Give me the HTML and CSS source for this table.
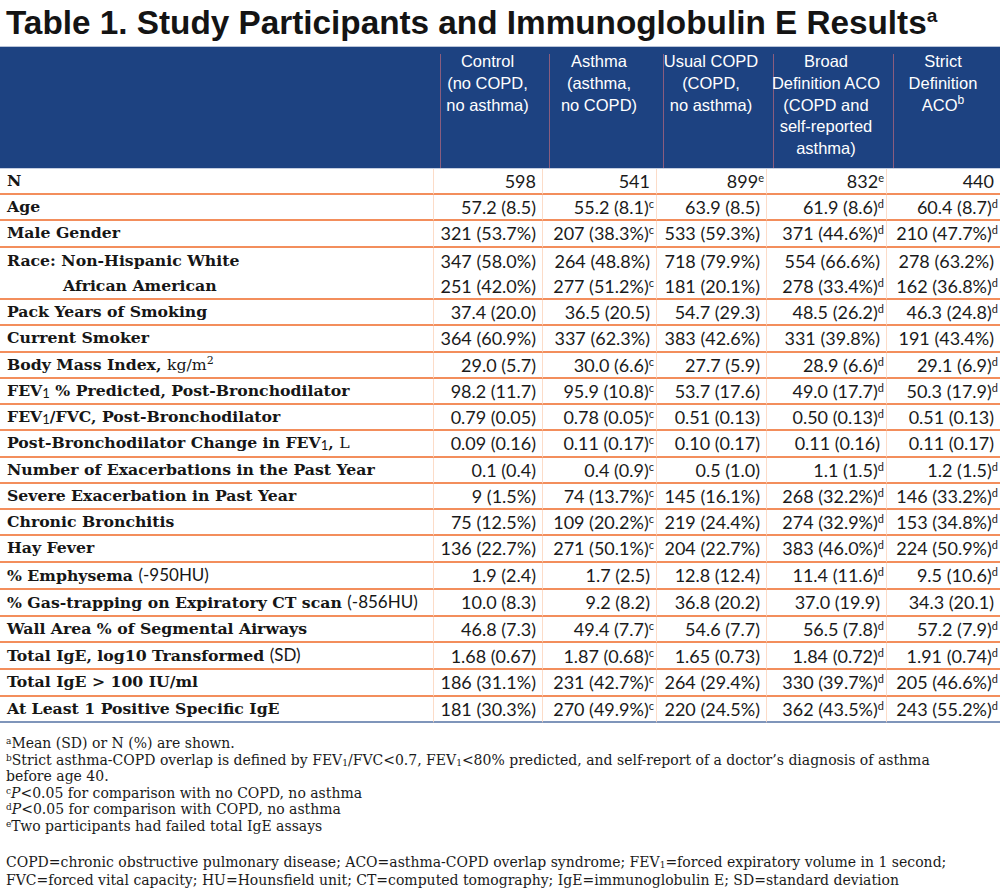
FILE: index.html
```html
<!DOCTYPE html>
<html lang="en">
<head>
<meta charset="utf-8">
<title>Table 1. Study Participants and Immunoglobulin E Results</title>
<link rel="stylesheet" href="styles.css">
</head>
<body>
<div class="page">
  <h1 class="title">Table 1. Study Participants and Immunoglobulin E Results<sup>a</sup></h1>
  <table class="results">
    <colgroup>
      <col class="c-label">
      <col class="c-ctrl">
      <col class="c-asth">
      <col class="c-copd">
      <col class="c-broad">
      <col class="c-strict">
    </colgroup>
    <thead>
      <tr>
        <th class="blank"></th>
        <th>Control<br>(no COPD,<br>no asthma)</th>
        <th>Asthma<br>(asthma,<br>no COPD)</th>
        <th>Usual COPD<br>(COPD,<br>no asthma)</th>
        <th>Broad<br>Definition ACO<br>(COPD and<br>self-reported<br>asthma)</th>
        <th>Strict<br>Definition<br>ACO<sup>b</sup></th>
      </tr>
    </thead>
    <tbody>
      <tr><td class="lbl">N</td><td>598</td><td>541</td><td>899<sup>e</sup></td><td>832<sup>e</sup></td><td>440</td></tr>
      <tr><td class="lbl">Age</td><td>57.2 (8.5)</td><td>55.2 (8.1)<sup>c</sup></td><td>63.9 (8.5)</td><td>61.9 (8.6)<sup>d</sup></td><td>60.4 (8.7)<sup>d</sup></td></tr>
      <tr><td class="lbl">Male Gender</td><td>321 (53.7%)</td><td>207 (38.3%)<sup>c</sup></td><td>533 (59.3%)</td><td>371 (44.6%)<sup>d</sup></td><td>210 (47.7%)<sup>d</sup></td></tr>
      <tr class="join"><td class="lbl">Race: Non-Hispanic White</td><td>347 (58.0%)</td><td>264 (48.8%)</td><td>718 (79.9%)</td><td>554 (66.6%)</td><td>278 (63.2%)</td></tr>
      <tr><td class="lbl indent">African American</td><td>251 (42.0%)</td><td>277 (51.2%)<sup>c</sup></td><td>181 (20.1%)</td><td>278 (33.4%)<sup>d</sup></td><td>162 (36.8%)<sup>d</sup></td></tr>
      <tr><td class="lbl">Pack Years of Smoking</td><td>37.4 (20.0)</td><td>36.5 (20.5)</td><td>54.7 (29.3)</td><td>48.5 (26.2)<sup>d</sup></td><td>46.3 (24.8)<sup>d</sup></td></tr>
      <tr><td class="lbl">Current Smoker</td><td>364 (60.9%)</td><td>337 (62.3%)</td><td>383 (42.6%)</td><td>331 (39.8%)</td><td>191 (43.4%)</td></tr>
      <tr><td class="lbl">Body Mass Index, <span class="unit">kg/m<span class="pow">2</span></span></td><td>29.0 (5.7)</td><td>30.0 (6.6)<sup>c</sup></td><td>27.7 (5.9)</td><td>28.9 (6.6)<sup>d</sup></td><td>29.1 (6.9)<sup>d</sup></td></tr>
      <tr><td class="lbl">FEV<sub>1</sub> % Predicted, Post-Bronchodilator</td><td>98.2 (11.7)</td><td>95.9 (10.8)<sup>c</sup></td><td>53.7 (17.6)</td><td>49.0 (17.7)<sup>d</sup></td><td>50.3 (17.9)<sup>d</sup></td></tr>
      <tr><td class="lbl">FEV<sub>1</sub>/FVC, Post-Bronchodilator</td><td>0.79 (0.05)</td><td>0.78 (0.05)<sup>c</sup></td><td>0.51 (0.13)</td><td>0.50 (0.13)<sup>d</sup></td><td>0.51 (0.13)</td></tr>
      <tr><td class="lbl">Post-Bronchodilator Change in FEV<sub>1</sub>, <span class="unit">L</span></td><td>0.09 (0.16)</td><td>0.11 (0.17)<sup>c</sup></td><td>0.10 (0.17)</td><td>0.11 (0.16)</td><td>0.11 (0.17)</td></tr>
      <tr><td class="lbl">Number of Exacerbations in the Past Year</td><td>0.1 (0.4)</td><td>0.4 (0.9)<sup>c</sup></td><td>0.5 (1.0)</td><td>1.1 (1.5)<sup>d</sup></td><td>1.2 (1.5)<sup>d</sup></td></tr>
      <tr><td class="lbl">Severe Exacerbation in Past Year</td><td>9 (1.5%)</td><td>74 (13.7%)<sup>c</sup></td><td>145 (16.1%)</td><td>268 (32.2%)<sup>d</sup></td><td>146 (33.2%)<sup>d</sup></td></tr>
      <tr><td class="lbl">Chronic Bronchitis</td><td>75 (12.5%)</td><td>109 (20.2%)<sup>c</sup></td><td>219 (24.4%)</td><td>274 (32.9%)<sup>d</sup></td><td>153 (34.8%)<sup>d</sup></td></tr>
      <tr><td class="lbl">Hay Fever</td><td>136 (22.7%)</td><td>271 (50.1%)<sup>c</sup></td><td>204 (22.7%)</td><td>383 (46.0%)<sup>d</sup></td><td>224 (50.9%)<sup>d</sup></td></tr>
      <tr><td class="lbl">% Emphysema <span class="plain">(-950HU)</span></td><td>1.9 (2.4)</td><td>1.7 (2.5)</td><td>12.8 (12.4)</td><td>11.4 (11.6)<sup>d</sup></td><td>9.5 (10.6)<sup>d</sup></td></tr>
      <tr><td class="lbl">% Gas-trapping on Expiratory CT scan <span class="plain">(-856HU)</span></td><td>10.0 (8.3)</td><td>9.2 (8.2)</td><td>36.8 (20.2)</td><td>37.0 (19.9)</td><td>34.3 (20.1)</td></tr>
      <tr><td class="lbl">Wall Area % of Segmental Airways</td><td>46.8 (7.3)</td><td>49.4 (7.7)<sup>c</sup></td><td>54.6 (7.7)</td><td>56.5 (7.8)<sup>d</sup></td><td>57.2 (7.9)<sup>d</sup></td></tr>
      <tr><td class="lbl">Total IgE, log10 Transformed <span class="plain">(SD)</span></td><td>1.68 (0.67)</td><td>1.87 (0.68)<sup>c</sup></td><td>1.65 (0.73)</td><td>1.84 (0.72)<sup>d</sup></td><td>1.91 (0.74)<sup>d</sup></td></tr>
      <tr><td class="lbl">Total IgE &gt; 100 IU/ml</td><td>186 (31.1%)</td><td>231 (42.7%)<sup>c</sup></td><td>264 (29.4%)</td><td>330 (39.7%)<sup>d</sup></td><td>205 (46.6%)<sup>d</sup></td></tr>
      <tr class="last"><td class="lbl">At Least 1 Positive Specific IgE</td><td>181 (30.3%)</td><td>270 (49.9%)<sup>c</sup></td><td>220 (24.5%)</td><td>362 (43.5%)<sup>d</sup></td><td>243 (55.2%)<sup>d</sup></td></tr>
    </tbody>
  </table>
  <div class="notes">
    <p class="note"><sup>a</sup>Mean (SD) or N (%) are shown.</p>
    <p class="note"><sup>b</sup>Strict asthma-COPD overlap is defined by FEV<sub>1</sub>/FVC&lt;0.7, FEV<sub>1</sub>&lt;80% predicted, and self-report of a doctor’s diagnosis of asthma before age 40.</p>
    <p class="note"><sup>c</sup><i>P</i>&lt;0.05 for comparison with no COPD, no asthma</p>
    <p class="note"><sup>d</sup><i>P</i>&lt;0.05 for comparison with COPD, no asthma</p>
    <p class="note"><sup>e</sup>Two participants had failed total IgE assays</p>
    <p class="abbr">COPD=chronic obstructive pulmonary disease; ACO=asthma-COPD overlap syndrome; FEV<sub>1</sub>=forced expiratory volume in 1 second; FVC=forced vital capacity; HU=Hounsfield unit; CT=computed tomography; IgE=immunoglobulin E; SD=standard deviation</p>
  </div>
</div>
</body>
</html>
```

FILE: styles.css
```css
html, body {
  margin: 0;
  padding: 0;
  background: #ffffff;
}

.page {
  width: 1000px;
  color: #111111;
}

.title {
  margin: 0;
  padding: 1px 0 0 6px;
  height: 45px;
  line-height: 44px;
  font-family: "Liberation Sans", Arial, sans-serif;
  font-weight: bold;
  font-size: 33.3px;
  letter-spacing: 0;
  color: #141414;
  white-space: nowrap;
}

.title sup {
  font-size: 19px;
  vertical-align: 12px;
  line-height: 0;
}

.results {
  width: 1000px;
  table-layout: fixed;
  border-collapse: separate;
  border-spacing: 0;
}

.c-label { width: 433px; }
.c-ctrl { width: 109px; }
.c-asth { width: 114px; }
.c-copd { width: 110px; }
.c-broad { width: 120px; }
.c-strict { width: 114px; }

.results thead th {
  background: linear-gradient(#8a5d7e, #8a5d7e) left 7px top 7px / 1px calc(100% - 7px) no-repeat, #1d4281;
  color: #ffffff;
  font-family: "Liberation Sans", Arial, sans-serif;
  font-weight: normal;
  font-size: 16.5px;
  line-height: 21.8px;
  text-align: center;
  vertical-align: top;
  padding: 4px 0 8px;
  border-top: 1px solid #b9c4d8;
  border-bottom: 1px solid #c4cde0;
}

.results thead th.blank {
  background: #1d4281;
}

.results thead th sup {
  font-size: 12px;
  vertical-align: 7px;
  line-height: 0;
}

.results tbody td {
  font-family: Lato, "Liberation Sans", sans-serif;
  font-size: 18px;
  color: #1a1a1a;
  line-height: 24.24px;
  padding: 0 6px 0 0;
  text-align: right;
  white-space: nowrap;
  border-left: 1px solid #fcdcc8;
  border-bottom: 2px solid #f38e5c;
}

.results tbody tr.join td {
  border-bottom: none;
  line-height: 26.24px;
}

.results tbody tr.last td {
  border-bottom: 2px solid #7f95ba;
}

.results tbody td.lbl {
  font-family: "DejaVu Serif", serif;
  font-weight: bold;
  font-size: 15.7px;
  text-align: left;
  padding: 0 0 0 7px;
  border-left: none;
  color: #161616;
}

.results tbody td.indent {
  padding-left: 63px;
}

.results tbody td sup {
  font-size: 11px;
  vertical-align: 6px;
  line-height: 0;
  margin-right: -4px;
}

.lbl sub {
  font-family: Lato, "Liberation Sans", sans-serif;
  font-weight: normal;
  font-size: 13px;
  vertical-align: -2px;
  line-height: 0;
}

.unit {
  font-weight: normal;
}

.pow {
  font-size: 11px;
  vertical-align: 6px;
  line-height: 0;
}

.plain {
  font-family: Lato, "Liberation Sans", sans-serif;
  font-weight: normal;
  font-size: 17px;
}

.notes {
  padding: 12px 0 0 6px;
  width: 960px;
  font-family: "DejaVu Serif", serif;
  font-size: 14px;
  color: #1a1a1a;
}

.note {
  margin: 0;
  line-height: 16.6px;
}

.notes sup {
  font-size: 9px;
  vertical-align: 4px;
  line-height: 0;
}

.notes sub {
  font-size: 9px;
  vertical-align: -1px;
  line-height: 0;
}

.abbr {
  margin: 19px 0 0;
  line-height: 18px;
}
```
